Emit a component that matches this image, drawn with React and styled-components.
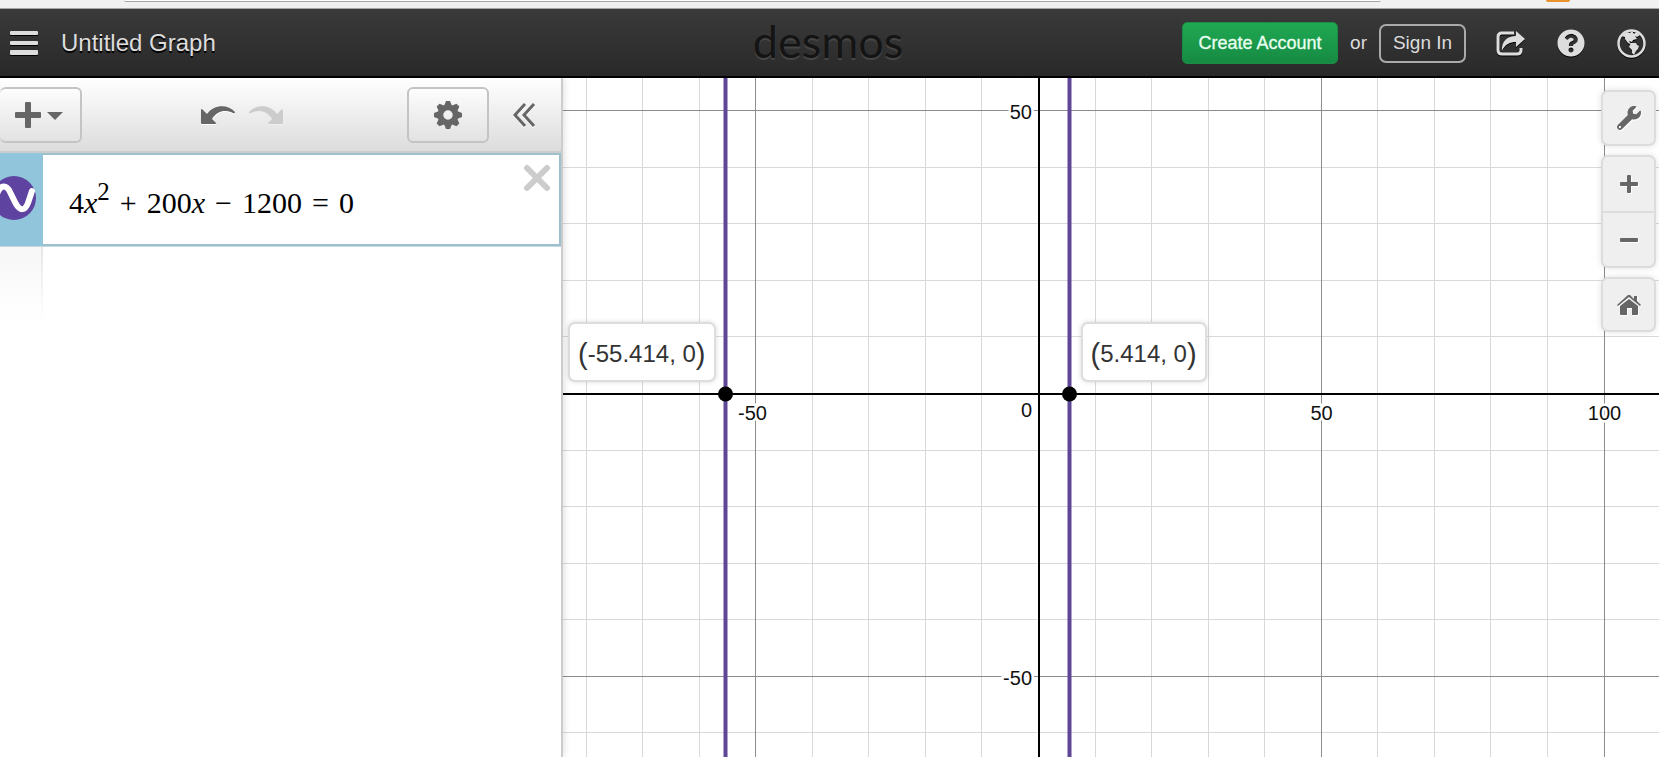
import React from "react";
import styled, { createGlobalStyle } from "styled-components";
import { FaQuestionCircle, FaWrench } from "react-icons/fa";

const GlobalStyle = createGlobalStyle`
  * { box-sizing: border-box; }
  html, body { margin: 0; background: #fff; }
  body { font-family: "Liberation Sans", Arial, sans-serif; color: #222; }
  button { font-family: inherit; padding: 0; cursor: pointer; }
  svg { display: block; }
`;

const Page = styled.div`
  display: flex;
  flex-direction: column;
  height: 100vh;
  overflow: hidden;
`;

const BrowserStrip = styled.div`
  display: flex;
  flex: none;
  justify-content: space-between;
  align-items: flex-start;
  height: 9px;
  padding: 0 89px 0 124px;
  background: #f1f1f1;
  border-bottom: 1px solid #a5a7a6;
`;

const AddressEdge = styled.div`
  flex: 1;
  height: 2px;
  margin-right: 165px;
  background: #fff;
  border-bottom: 1px solid #a5a7a6;
  border-radius: 0 0 2px 2px;
`;

const TabBadge = styled.div`
  width: 24px;
  height: 2px;
  background: #ea922e;
  border-radius: 0 0 2px 2px;
`;

const Header = styled.header`
  display: grid;
  flex: none;
  grid-template-columns: 1fr auto 1fr;
  align-items: center;
  height: 69px;
  padding: 1px 13px 0 10px;
  background: linear-gradient(#3a3a3a, #292929);
  border-bottom: 2px solid #000;
  color: #ddd;
`;

const HeaderGroup = styled.div`
  display: flex;
  align-items: center;
  justify-content: ${(p) => (p.$end ? "flex-end" : "flex-start")};
  gap: ${(p) => p.$gap}px;
`;

const PlainButton = styled.button`
  display: flex;
  border: 0;
  background: none;
  color: ${(p) => p.$color || "#ddd"};
  filter: drop-shadow(0 1px 0 ${(p) => p.$shadow || "#000"});
`;

const Title = styled.h1`
  margin: 0;
  font-size: 24px;
  line-height: 28px;
  font-weight: 400;
  text-shadow: 0 2px 0 #000;
`;

const Logo = styled.a`
  color: #141414;
  font-family: Lato, sans-serif;
  font-size: 45px;
  font-weight: 400;
  line-height: 56px;
  padding-bottom: 4px;
  text-decoration: none;
  text-shadow: 0 2px 1px #484848;
`;

const CreateButton = styled.button`
  height: 42px;
  width: 156px;
  border: 1px solid #1b8a44;
  border-radius: 5px;
  background: linear-gradient(#20a953, #168a42);
  color: #e9fff1;
  font-size: 18px;
  -webkit-text-stroke: 0.3px #e9fff1;
`;

const SignInButton = styled.button`
  height: 39px;
  width: 87px;
  border: 2px solid #aaa;
  border-radius: 7px;
  background: none;
  color: #ddd;
  font-size: 19px;
`;

const Or = styled.span`
  font-size: 19px;
`;

const Icons = styled.div`
  display: flex;
  align-items: center;
  gap: 32px;
  margin-left: 18px;
`;

const Workspace = styled.main`
  display: flex;
  flex: 1;
  min-height: 0;
`;

const Sidebar = styled.section`
  display: flex;
  flex: none;
  flex-direction: column;
  width: 563px;
  background: #fff;
  border-right: 2px solid #ccc;
  box-shadow: 0 0 8px rgba(0, 0, 0, 0.16);
  z-index: 1;
`;

const Toolbar = styled.div`
  display: flex;
  justify-content: space-between;
  align-items: center;
  height: 75px;
  padding: 1px 25px 0 0;
  background: linear-gradient(#fff, #dcdcdc);
  border-bottom: 2px solid #ccc;
`;

const ToolGroup = styled.div`
  display: flex;
  align-items: center;
  gap: ${(p) => p.$gap}px;
`;

const HistoryGroup = styled(ToolGroup)`
  padding-right: 5px;
`;

const ToolButton = styled.button`
  display: flex;
  align-items: center;
  justify-content: center;
  gap: 6px;
  width: 82px;
  height: 56px;
  padding-right: ${(p) => (p.$flush ? 3 : 0)}px;
  border: 2px solid #c4c4c4;
  border-left-width: ${(p) => (p.$flush ? 0 : 2)}px;
  border-radius: 6px;
  background: linear-gradient(#fdfdfd, #e2e2e2);
  color: #666;
`;

const Expression = styled.div`
  display: flex;
  height: 94px;
  border-bottom: 1px solid #c5d9e0;
`;

const ExpressionTab = styled.div`
  display: flex;
  align-items: center;
  width: 43px;
  padding-bottom: 3px;
  overflow: hidden;
  background: #90c5dc;
`;

const CurveToggle = styled.button`
  flex: none;
  width: 44px;
  height: 44px;
  margin-left: -8px;
  border: 0;
  border-radius: 50%;
  background: #5f43a0;
`;

const ExpressionBody = styled.div`
  display: flex;
  flex: 1;
  justify-content: space-between;
  align-items: flex-start;
  padding: 0 8px 0 26px;
  border: 2px solid #9dc0cd;
  border-left: 0;
`;

const Formula = styled.div`
  padding-top: 31px;
  color: #000;
  font-family: "Liberation Serif", "Times New Roman", serif;
  font-size: 30px;
  line-height: 34px;
  white-space: nowrap;
  outline: none;

  sup {
    font-size: 25px;
    line-height: 0;
    vertical-align: 13px;
  }
`;

const Operator = styled.span`
  margin: 0 10px;
`;

const DeleteButton = styled(PlainButton)`
  margin-top: 9px;
`;

const GutterFade = styled.div`
  width: 43px;
  height: 74px;
  border-right: 2px solid;
  border-image: linear-gradient(#e6e6e6, #fff) 1;
  background: linear-gradient(#f7f7f7, #fff);
`;

const Graph = styled.section`
  position: relative;
  flex: 1;
  min-width: 0;
  overflow: hidden;
`;

const Plot = styled.svg`
  position: absolute;
  inset: 0;
  width: 100%;
  height: 100%;
`;

const AxisLabel = styled.text`
  font-size: 20px;
  fill: #111;
  stroke: #fff;
  stroke-width: 5px;
  paint-order: stroke;
`;

const PointLabel = styled.div`
  position: absolute;
  display: flex;
  align-items: center;
  height: 60px;
  padding: 4px 8px 0;
  border: 2px solid #ddd;
  border-radius: 7px;
  background: #fff;
  box-shadow: 0 0 5px rgba(0, 0, 0, 0.15);
  color: #333;
  font-size: 24px;
  line-height: 30px;
  white-space: pre;
`;

const Paren = styled.span`
  font-size: 29px;
`;

const GraphControls = styled.div`
  position: absolute;
  top: 12px;
  right: 3px;
  display: flex;
  flex-direction: column;
  gap: 9px;
`;

const ControlCard = styled.div`
  display: flex;
  flex-direction: column;
  width: 55px;
  border: 2px solid #dcdcdc;
  border-radius: 7px;
  background: #efefef;
  box-shadow: 0 0 6px rgba(0, 0, 0, 0.12);
`;

const ControlButton = styled.button`
  display: flex;
  align-items: center;
  justify-content: center;
  height: ${(p) => p.$height || 52}px;
  border: 0;
  background: none;
  color: #666;

  & + & {
    border-top: 2px solid #dcdcdc;
  }

  svg {
    filter: drop-shadow(1px 1px 0 #fff);
  }
`;

const MenuIcon = () => (
  <svg width="28" height="24" fill="currentColor">
    <rect width="28" height="4" rx="1" />
    <rect y="10" width="28" height="4" rx="1" />
    <rect y="19" width="28" height="5" rx="1" />
  </svg>
);

const ShareIcon = () => (
  <svg width="29" height="25" viewBox="0 0 29 25" fill="none">
    <path d="M18 2H6Q2 2 2 6V19Q2 23 6 23H21Q25 23 25 19V17" stroke="currentColor" strokeWidth="3" />
    <path d="M6 20C5 10 12 5 20 5V0L29 8L20 16V11C14 11 9 13 6 20Z" fill="currentColor" />
  </svg>
);

const GlobeIcon = () => (
  <svg width="29" height="29" viewBox="0 0 29 29" fill="currentColor">
    <circle cx="14.5" cy="14.5" r="13" fill="none" stroke="currentColor" strokeWidth="2.5" />
    <path d="M4 7L10 3L13 4L15 2L17 5L19 3L23 6L20 8L18 7L20 10L16 11L15 13L12 12L13 14L16 15L15 16L11 14L8 10L8 8Z" />
    <path d="M14 14L19 14L20 16L22 17L21 20L19 22L17 26L15 24L15 21L12 18Z" />
  </svg>
);

const UndoIcon = ({ flip }) => (
  <svg width="34" height="19" viewBox="0 0 34 19" fill="currentColor">
    <path
      transform={flip ? "translate(34 0) scale(-1 1)" : undefined}
      d="M1 3L6 8C13-2 27-2 34 6Q34 8 32 7C24 3 16 5 11 13L15 17Q16 18 14 18H1Q0 18 0 17V4Q0 3 1 3Z"
    />
  </svg>
);

const GearIcon = () => (
  <svg width="28" height="28" viewBox="-14 -14 28 28" fill="currentColor">
    {[0, 45, 90, 135, 180, 225, 270, 315].map((a) => (
      <path key={a} d="M-4-9L-2-14H2L4-9Z" transform={`rotate(${a})`} />
    ))}
    <circle r="7.5" fill="none" stroke="currentColor" strokeWidth="5.5" />
  </svg>
);

const PlusIcon = ({ size, bar }) => (
  <svg width={size} height={size} fill="currentColor">
    <rect x={(size - bar) / 2} width={bar} height={size} rx="1" />
    <rect y={(size - bar) / 2} width={size} height={bar} rx="1" />
  </svg>
);

const HomeIcon = () => (
  <svg width="24" height="20" viewBox="0 0 24 20" fill="currentColor">
    <path d="M17 1H20V6L24 10L23 11L12 2L1 11L0 10L11 0H13L17 4Z" />
    <path d="M12 4L21 11V19Q21 20 20 20H15V13H10V20H4Q3 20 3 19V11Z" />
  </svg>
);

// Graph-space constants: pixels per unit and the origin inside the plot.
const UNIT = 5.655;
const ORIGIN = { x: 475, y: 315 };
const steps = Array.from({ length: 81 }, (_, i) => i - 40).filter((k) => k !== 0);
const toX = (v) => Math.round(ORIGIN.x + v * UNIT) + 0.5;
const toY = (v) => Math.round(ORIGIN.y - v * UNIT) + 0.5;
const lineColor = (k) => (k % 5 === 0 ? "#8c8c8c" : "#d9d9d9");
const minorFirst = [...steps].sort((a, b) => (a % 5 === 0) - (b % 5 === 0));
const ROOTS = [-55.414, 5.414];

function GraphPaper() {
  return (
    <Plot role="img" aria-label="Graph of the two vertical solution lines">
      {minorFirst.map((k) => (
        <g key={k} stroke={lineColor(k)}>
          <line x1={toX(k * 10)} x2={toX(k * 10)} y1="0" y2="100%" />
          <line y1={toY(k * 10)} y2={toY(k * 10)} x1="0" x2="100%" />
        </g>
      ))}
      <g stroke="#000" strokeWidth="2">
        <line x1={ORIGIN.x + 1} x2={ORIGIN.x + 1} y1="0" y2="100%" />
        <line y1={ORIGIN.y + 1} y2={ORIGIN.y + 1} x1="0" x2="100%" />
      </g>
      <AxisLabel x={toX(-50) - 3} y={ORIGIN.y + 27} textAnchor="middle">-50</AxisLabel>
      <AxisLabel x={toX(50)} y={ORIGIN.y + 27} textAnchor="middle">50</AxisLabel>
      <AxisLabel x={toX(100)} y={ORIGIN.y + 27} textAnchor="middle">100</AxisLabel>
      <AxisLabel x={ORIGIN.x - 6} y={ORIGIN.y + 24} textAnchor="end">0</AxisLabel>
      <AxisLabel x={ORIGIN.x - 6} y={toY(50) + 8} textAnchor="end">50</AxisLabel>
      <AxisLabel x={ORIGIN.x - 6} y={toY(-50) + 8} textAnchor="end">-50</AxisLabel>
      {ROOTS.map((r) => (
        <g key={r}>
          <line x1={toX(r)} x2={toX(r)} y1="0" y2="100%" stroke="#5f4798" strokeWidth="4" />
          <circle cx={toX(r)} cy={ORIGIN.y + 1} r="7.5" />
        </g>
      ))}
    </Plot>
  );
}

export default function App() {
  return (
    <Page>
      <GlobalStyle />
      <BrowserStrip>
        <AddressEdge />
        <TabBadge />
      </BrowserStrip>
      <Header>
        <HeaderGroup $gap={23}>
          <PlainButton aria-label="Open menu"><MenuIcon /></PlainButton>
          <Title>Untitled Graph</Title>
        </HeaderGroup>
        <Logo href="#">desmos</Logo>
        <HeaderGroup $end $gap={12}>
          <CreateButton>Create Account</CreateButton>
          <Or>or</Or>
          <SignInButton>Sign In</SignInButton>
          <Icons>
            <PlainButton aria-label="Share"><ShareIcon /></PlainButton>
            <PlainButton aria-label="Help"><FaQuestionCircle size={28} /></PlainButton>
            <PlainButton aria-label="Language"><GlobeIcon /></PlainButton>
          </Icons>
        </HeaderGroup>
      </Header>
      <Workspace>
        <Sidebar>
          <Toolbar>
            <ToolButton $flush aria-label="Add item">
              <PlusIcon size={26} bar={6} />
              <svg width="16" height="10" fill="currentColor"><path d="M0 2H16L8 10Z" /></svg>
            </ToolButton>
            <HistoryGroup $gap={14}>
              <PlainButton $color="#666" $shadow="#fff" aria-label="Undo"><UndoIcon /></PlainButton>
              <PlainButton $color="#ccc" $shadow="#eee" aria-label="Redo"><UndoIcon flip /></PlainButton>
            </HistoryGroup>
            <ToolGroup $gap={24}>
              <ToolButton aria-label="Edit list"><GearIcon /></ToolButton>
              <PlainButton $color="#666" $shadow="#fff" aria-label="Hide list">
                <svg width="23" height="24" fill="none" stroke="currentColor" strokeWidth="3">
                  <path d="M12 1L2 12L12 23M21 1L11 12L21 23" />
                </svg>
              </PlainButton>
            </ToolGroup>
          </Toolbar>
          <Expression>
            <ExpressionTab>
              <CurveToggle aria-label="Toggle curve">
                <svg width="44" height="44" fill="none" stroke="#fff" strokeWidth="6" strokeLinecap="round">
                  <path d="M4 22C7 8 14 8 18 16L24 28C28 35 33 35 36 27L40 15" />
                </svg>
              </CurveToggle>
            </ExpressionTab>
            <ExpressionBody>
              <Formula role="textbox" aria-label="Expression 1" contentEditable suppressContentEditableWarning>
                4<i>x</i><sup>2</sup><Operator>+</Operator>200<i>x</i><Operator>−</Operator>1200<Operator>=</Operator>0
              </Formula>
              <DeleteButton $color="#ccc" $shadow="#fff" aria-label="Delete expression">
                <svg width="28" height="28" stroke="currentColor" strokeWidth="6" strokeLinecap="round">
                  <path d="M4 4L24 24M24 4L4 24" />
                </svg>
              </DeleteButton>
            </ExpressionBody>
          </Expression>
          <GutterFade />
        </Sidebar>
        <Graph>
          <GraphPaper />
          {ROOTS.map((r) => (
            <PointLabel
              key={r}
              style={r < 0
                ? { top: ORIGIN.y - 71, right: `calc(100% - ${toX(r) - 10}px)` }
                : { top: ORIGIN.y - 71, left: toX(r) + 11 }}
            >
              <Paren>(</Paren>{`${r}, 0`}<Paren>)</Paren>
            </PointLabel>
          ))}
          <GraphControls>
            <ControlCard>
              <ControlButton aria-label="Graph settings"><FaWrench size={24} /></ControlButton>
            </ControlCard>
            <ControlCard>
              <ControlButton $height={54} aria-label="Zoom in"><PlusIcon size={18} bar={4} /></ControlButton>
              <ControlButton $height={55} aria-label="Zoom out">
                <svg width="18" height="4" fill="currentColor"><rect width="18" height="4" rx="1" /></svg>
              </ControlButton>
            </ControlCard>
            <ControlCard>
              <ControlButton $height={51} aria-label="Default view"><HomeIcon /></ControlButton>
            </ControlCard>
          </GraphControls>
        </Graph>
      </Workspace>
    </Page>
  );
}
